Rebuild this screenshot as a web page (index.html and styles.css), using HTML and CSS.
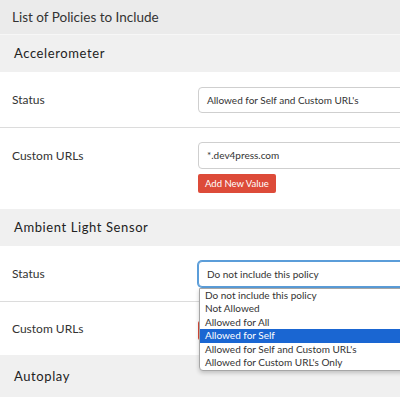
FILE: index.html
```html
<!DOCTYPE html>
<html lang="en">
<head>
    <meta charset="UTF-8">
    <meta name="viewport" content="width=device-width, initial-scale=1.0">
    <title>List of Policies to Include</title>
    <link rel="stylesheet" href="styles.css">
</head>
<body>

<div class="policies">
    <div class="policies-title">List of Policies to Include</div>

    <div class="policy-name">Accelerometer</div>
    <div class="policy-row row-status">
        <div class="row-label">Status</div>
        <div class="row-field">
            <div class="select-box">Allowed for Self and Custom URL's</div>
        </div>
    </div>
    <div class="policy-row row-urls">
        <div class="row-label">Custom URLs</div>
        <div class="row-field">
            <div class="text-box">*.dev4press.com</div>
            <button type="button" class="btn-add">Add New Value</button>
        </div>
    </div>

    <div class="policy-name">Ambient Light Sensor</div>
    <div class="policy-row row-status">
        <div class="row-label">Status</div>
        <div class="row-field">
            <div class="select-box is-focused">Do not include this policy</div>
            <ul class="select-list">
                <li>Do not include this policy</li>
                <li>Not Allowed</li>
                <li>Allowed for All</li>
                <li class="is-active">Allowed for Self</li>
                <li>Allowed for Self and Custom URL's</li>
                <li>Allowed for Custom URL's Only</li>
            </ul>
        </div>
    </div>
    <div class="policy-row row-urls-empty">
        <div class="row-label">Custom URLs</div>
        <div class="row-field">
            <button type="button" class="btn-add btn-hidden">Add New Value</button>
        </div>
    </div>

    <div class="policy-name policy-last">Autoplay</div>
</div>

</body>
</html>
```

FILE: styles.css
```css
body {
    margin: 0;
    background-color: #fff;
    font-family: 'Lato', 'Open Sans', sans-serif;
    color: #333;
    overflow: hidden;
}
.policies {
    width: 560px;
}
.policies-title {
    height: 34px;
    line-height: 34px;
    padding-left: 12px;
    background-color: #ebebeb;
    border-bottom: 1px solid #f7f7f7;
    font-size: 13.5px;
    color: #333;
}
.policy-name {
    height: 37px;
    line-height: 37px;
    padding-left: 14px;
    background-color: #f0f0f0;
    font-size: 13px;
    letter-spacing: 0.6px;
    color: #222;
}
.policy-name.policy-last {
    height: 42px;
    line-height: 42px;
}
.policy-row {
    display: grid;
    grid-template-columns: 198px 1fr;
    align-items: center;
    background-color: #fff;
}
.row-status {
    height: 55px;
    border-bottom: 1px solid #dcdcdc;
}
.row-urls {
    align-items: start;
    padding: 14px 0 15px;
    height: 52px;
}
.row-urls .row-label {
    line-height: 27px;
}
.row-urls-empty {
    height: 53px;
}
.row-label {
    padding-left: 12px;
    font-size: 12px;
    color: #333;
}
.row-field {
    position: relative;
}
.select-box, .text-box {
    height: 24px;
    line-height: 24px;
    padding-left: 8px;
    border: 1px solid #cfcfcf;
    border-radius: 4px;
    font-size: 10px;
    color: #333;
    background-color: #fff;
}
.text-box {
    height: 25px;
    line-height: 25px;
}
.select-box.is-focused {
    border-color: #5b9dd9;
    box-shadow: 0 0 0 1px #5b9dd9;
}
.btn-add {
    display: block;
    margin-top: 5px;
    height: 19px;
    padding: 0 7px;
    border: none;
    border-radius: 2px;
    background-color: #dd4b39;
    color: #fff;
    font-family: inherit;
    font-size: 9.5px;
}
.btn-hidden {
    margin-top: 3px;
    color: transparent;
}
.select-list {
    position: absolute;
    top: 27px;
    left: 1px;
    width: 300px;
    margin: 0;
    padding: 0;
    list-style: none;
    background-color: #fff;
    border: 1px solid #a6a6a6;
    border-radius: 0 0 4px 4px;
    box-shadow: 0 2px 4px rgba(0, 0, 0, 0.2);
    z-index: 2;
}
.select-list li {
    height: 13.5px;
    line-height: 13.5px;
    padding-left: 5px;
    font-size: 10px;
    color: #333;
}
.select-list li.is-active {
    background-color: #1a66d2;
    color: #fff;
}
```
